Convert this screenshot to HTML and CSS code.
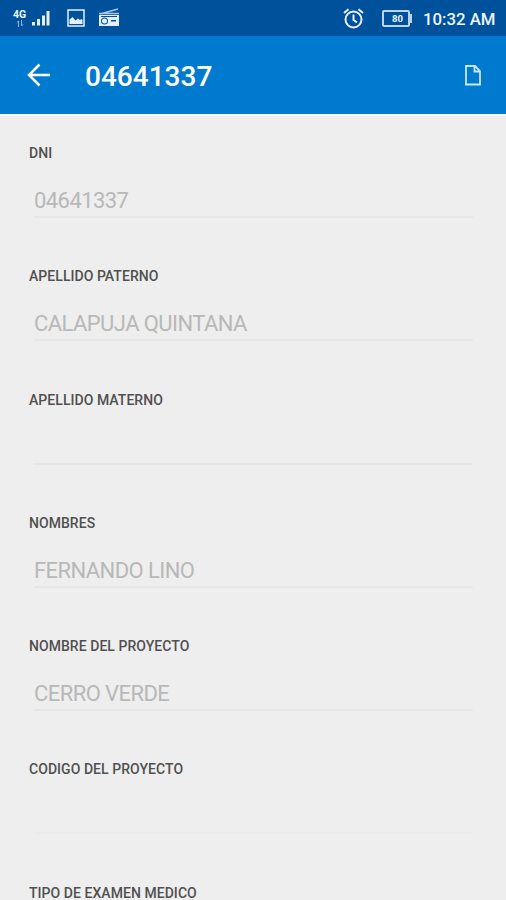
FILE: index.html
```html
<!DOCTYPE html>
<html lang="es">
<head>
<meta charset="utf-8">
<title>04641337</title>
<link rel="stylesheet" href="styles.css">
</head>
<body>
<header class="status">
  <div class="network"><span class="generation">4G</span>
    <svg width="8" height="7" viewBox="0 0 8 7" fill="none" stroke="#8db5df" stroke-width="1"><path d="M2.500 7V1L.8 2.700M5.500 0v6l1.700-1.700"/></svg>
  </div>
  <svg class="signal" width="18" height="16" viewBox="0 0 18 16" fill="#e4f0ff"><path d="M0 12h3v3.500H0zM5 9h3v6.500H5zM10 5.500h3v10h-3zM14.500 1h3v14.500h-3z"/></svg>
  <svg class="picture" width="18" height="18" viewBox="0 0 18 18"><rect x="1" y="1" width="16" height="16" fill="none" stroke="#e4f0ff" stroke-width="1.500"/><path d="M2.500 15v-4.500L5.500 8l3 3.500 2.500-2 2 1.500 1.500-1 1 1V15z" fill="#e4f0ff"/></svg>
  <svg class="radio" width="22" height="19" viewBox="0 0 22 19"><path d="M2 6 20 1M1 5.500h20" stroke="#a9c8e8" stroke-width="1.300" fill="none"/><path fill="#e4f0ff" fill-rule="evenodd" d="M1 7h20v11H1zM6.500 9.500a3.500 3.500 0 1 0 0 7 3.500 3.500 0 0 0 0-7zM3 8v1h16V8zM13 12v1.500h5V12z"/><circle cx="6.500" cy="13" r="2.500" fill="#e4f0ff"/></svg>
  <svg class="alarm" width="21" height="21" viewBox="0 0 21 21" fill="none" stroke="#e8f2ff" stroke-width="2"><circle cx="10.500" cy="11.500" r="8"/><path d="M1 5 5.500 1.300M20 5l-4.500-3.700M10.500 6.500v5.500l3.500 2.300"/></svg>
  <div class="battery"><span>80</span></div>
  <time class="clock">10:32 AM</time>
</header>
<nav class="toolbar">
  <svg class="back" width="24" height="24" viewBox="0 0 24 24" fill="none" stroke="#fff" stroke-width="2.500"><path d="M23 12H2M12.500 1.500 2 12l10.500 10.500"/></svg>
  <h1>04641337</h1>
  <svg class="document" width="16" height="21" viewBox="0 0 16 21" fill="none" stroke="#c9e6fb" stroke-width="1.800"><path d="M1 1h9l5 5v13.500H1zM9.500 1v5.500H15"/></svg>
</nav>
<main class="form">
  <section class="field"><h2>DNI</h2><p>04641337</p></section>
  <section class="field"><h2>APELLIDO PATERNO</h2><p>CALAPUJA QUINTANA</p></section>
  <section class="field"><h2>APELLIDO MATERNO</h2><p></p></section>
  <section class="field"><h2>NOMBRES</h2><p>FERNANDO LINO</p></section>
  <section class="field"><h2>NOMBRE DEL PROYECTO</h2><p>CERRO VERDE</p></section>
  <section class="field"><h2>CODIGO DEL PROYECTO</h2><p class="faint"></p></section>
  <section class="field"><h2>TIPO DE EXAMEN MEDICO</h2></section>
</main>
</body>
</html>
```
FILE: styles.css
```css
* { box-sizing: border-box; }
body {
  margin: 0;
  height: 900px;
  overflow: hidden;
  background: #eee;
  font-family: Roboto, sans-serif;
}
svg { display: block; flex: none; }
h1, h2, p { margin: 0; white-space: nowrap; }
.status {
  height: 36px;
  display: flex;
  align-items: center;
  padding: 0 11px 0 12px;
  background: #00519b;
  color: #eef6ff;
}
.network {
  width: 15px;
  display: flex;
  flex-direction: column;
  align-items: center;
  margin-right: 5px;
}
.generation { font-size: 10.5px; line-height: 11px; font-weight: 700; }
.picture { margin-left: 17px; }
.radio { margin-left: 13px; margin-top: -1px; }
.alarm { margin-left: auto; }
.battery {
  position: relative;
  width: 28px;
  height: 17px;
  margin-left: 18px;
  padding-left: 3px;
  border: 2px solid #bdd4ed;
  border-radius: 2px;
  font-size: 9.5px;
  font-weight: 700;
  line-height: 14px;
  text-align: center;
}
.battery::after {
  content: "";
  position: absolute;
  right: -4px;
  top: 2px;
  width: 2px;
  height: 9px;
  background: #bdd4ed;
}
.clock {
  width: 72px;
  margin-left: 13px;
  font-size: 16.8px;
  font-weight: 500;
  line-height: 20px;
  white-space: nowrap;
  padding-top: 2px;
}
.toolbar {
  height: 78px;
  display: flex;
  align-items: center;
  padding: 0 25px 0 27px;
  background: #007acf;
  color: #fff;
}
.toolbar h1 {
  margin-left: 34px;
  font-size: 28px;
  line-height: 34px;
  font-weight: 500;
  padding-top: 3px;
}
.document { margin-left: auto; }
.form {
  height: 786px;
  overflow: hidden;
  padding: 28px 28px 0;
  border-top: 2px solid #f8f8f7;
}
.field { height: 123.25px; }
.field:last-child { height: 18px; }
.field h2 {
  padding-left: 1px;
  font-size: 14px;
  line-height: 18px;
  font-weight: 500;
  letter-spacing: 0.05px;
  color: #505050;
}
.field p {
  height: 56px;
  margin: 0 5px 0 6px;
  padding-top: 26px;
  border-bottom: 2px solid #e7e7e7;
  font-size: 22px;
  line-height: 26px;
  letter-spacing: -0.57px;
  color: #b8b8b8;
}
.field .faint { border-bottom-color: #ebebeb; }
```
